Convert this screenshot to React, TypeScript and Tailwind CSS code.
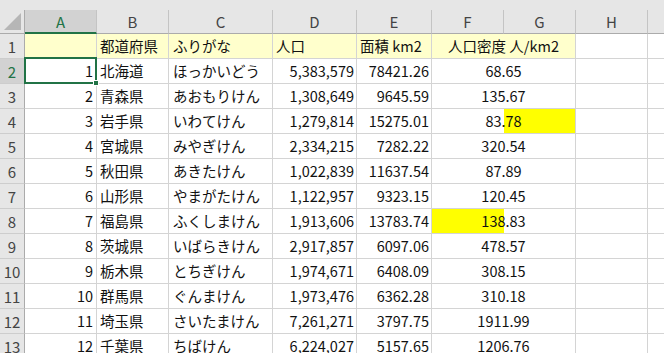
const rows = [
  ['1', '北海道', 'ほっかいどう', '5,383,579', '78421.26', '68.65', ''],
  ['2', '青森県', 'あおもりけん', '1,308,649', '9645.59', '135.67', ''],
  ['3', '岩手県', 'いわてけん', '1,279,814', '15275.01', '83.78', 'G'],
  ['4', '宮城県', 'みやぎけん', '2,334,215', '7282.22', '320.54', ''],
  ['5', '秋田県', 'あきたけん', '1,022,839', '11637.54', '87.89', ''],
  ['6', '山形県', 'やまがたけん', '1,122,957', '9323.15', '120.45', ''],
  ['7', '福島県', 'ふくしまけん', '1,913,606', '13783.74', '138.83', 'F'],
  ['8', '茨城県', 'いばらきけん', '2,917,857', '6097.06', '478.57', ''],
  ['9', '栃木県', 'とちぎけん', '1,974,671', '6408.09', '308.15', ''],
  ['10', '群馬県', 'ぐんまけん', '1,973,476', '6362.28', '310.18', ''],
  ['11', '埼玉県', 'さいたまけん', '7,261,271', '3797.75', '1911.99', ''],
  ['12', '千葉県', 'ちばけん', '6,224,027', '5157.65', '1206.76', ''],
  ['', '', '', '', '', '', ''],
];

const cols = [
  { id: 'A', w: 'w-[72px]' },
  { id: 'B', w: 'w-[72px]' },
  { id: 'C', w: 'w-[104px]' },
  { id: 'D', w: 'w-[84px]' },
  { id: 'E', w: 'w-[75px]' },
  { id: 'F', w: 'w-[72px]' },
  { id: 'G', w: 'w-[72px]' },
  { id: 'H', w: 'w-[72px]' },
];

const cell = 'h-[25px] shrink-0 border-r border-b border-[#d4d4d4] flex items-center leading-none whitespace-nowrap overflow-hidden';

function RowHead({ n, sel }: { n: number; sel?: boolean }) {
  return (
    <div className={`h-[25px] w-[25px] shrink-0 flex items-center justify-center border-r border-r-[#ababab] border-b border-b-[#cdcdcd] text-[15px] leading-none ${sel ? 'bg-[#d2d2d2] text-[#217346]' : 'bg-[#e6e6e6] text-[#444]'}`}>
      {n}
    </div>
  );
}

export default function App() {
  return (
    <div className="h-[353px] w-[664px] overflow-hidden bg-white text-[#111] font-['Noto_Sans_CJK_JP','Noto_Sans',sans-serif]">
      <div className="h-[10px] bg-[#e6e6e6]" />
      <div className="flex h-[24px] bg-[#e6e6e6]">
        <div className="w-[25px] h-[24px] shrink-0 border-r border-r-[#ababab] border-b border-b-[#ababab] flex items-end justify-end pr-[2px] pb-[2px]">
          <svg width="18" height="18" viewBox="0 0 18 18">
            <polygon points="17,0 17,17 0,17" fill="#b6b6b6" />
          </svg>
        </div>
        {cols.map((c) => (
          <div
            key={c.id}
            className={`${c.w} h-[24px] shrink-0 flex items-center justify-center text-[15px] leading-none border-r border-r-[#c4c4c4] ${c.id === 'A' ? 'bg-[#d2d2d2] text-[#217346] border-b-2 border-b-[#217346]' : 'text-[#444] border-b border-b-[#ababab]'}`}
          >
            {c.id}
          </div>
        ))}
        <div className="flex-1 h-[24px] border-b border-b-[#ababab]" />
      </div>

      {/* row 1: headings */}
      <div className="flex text-[14.5px]">
        <RowHead n={1} />
        <div className={`${cell} w-[72px] bg-[#ffffcc]`} />
        <div className={`${cell} w-[72px] bg-[#ffffcc] pl-[3px]`}>都道府県</div>
        <div className={`${cell} w-[104px] bg-[#ffffcc] pl-[4px]`}>ふりがな</div>
        <div className={`${cell} w-[84px] bg-[#ffffcc] pl-[3px]`}>人口</div>
        <div className={`${cell} w-[75px] bg-[#ffffcc] pl-[3px]`}>面積 km2</div>
        <div className={`${cell} w-[144px] bg-[#ffffcc] justify-center`}>人口密度 人/km2</div>
        <div className={`${cell} w-[72px]`} />
        <div className={`${cell} flex-1 border-r-0`} />
      </div>

      {rows.map((r, i) => (
        <div key={i} className="flex text-[14.5px]">
          <RowHead n={i + 2} sel={i === 0} />
          <div className={`${cell} w-[72px] justify-end pr-[3px] ${i === 0 ? 'relative overflow-visible' : ''}`}>
            {r[0]}
            {i === 0 && (
              <div className="absolute -left-px -top-[2px] -right-px -bottom-px z-10 border-2 border-[#217346]">
                <div className="absolute -right-[4px] -bottom-[4px] h-[6px] w-[6px] bg-[#217346] border border-white" />
              </div>
            )}
          </div>
          <div className={`${cell} w-[72px] pl-[3px]`}>{r[1]}</div>
          <div className={`${cell} w-[104px] pl-[4px]`}>{r[2]}</div>
          <div className={`${cell} w-[84px] justify-end pr-[2px]`}>{r[3]}</div>
          <div className={`${cell} w-[75px] justify-end pr-[2px]`}>{r[4]}</div>
          <div
            className={`${cell} w-[144px] justify-center ${r[6] === 'G' ? 'bg-[linear-gradient(to_right,transparent_72px,#ffff00_72px)]' : ''} ${r[6] === 'F' ? 'bg-[linear-gradient(to_right,#ffff00_72px,transparent_72px)]' : ''}`}
          >
            {r[5]}
          </div>
          <div className={`${cell} w-[72px]`} />
          <div className={`${cell} flex-1 border-r-0`} />
        </div>
      ))}
    </div>
  );
}
